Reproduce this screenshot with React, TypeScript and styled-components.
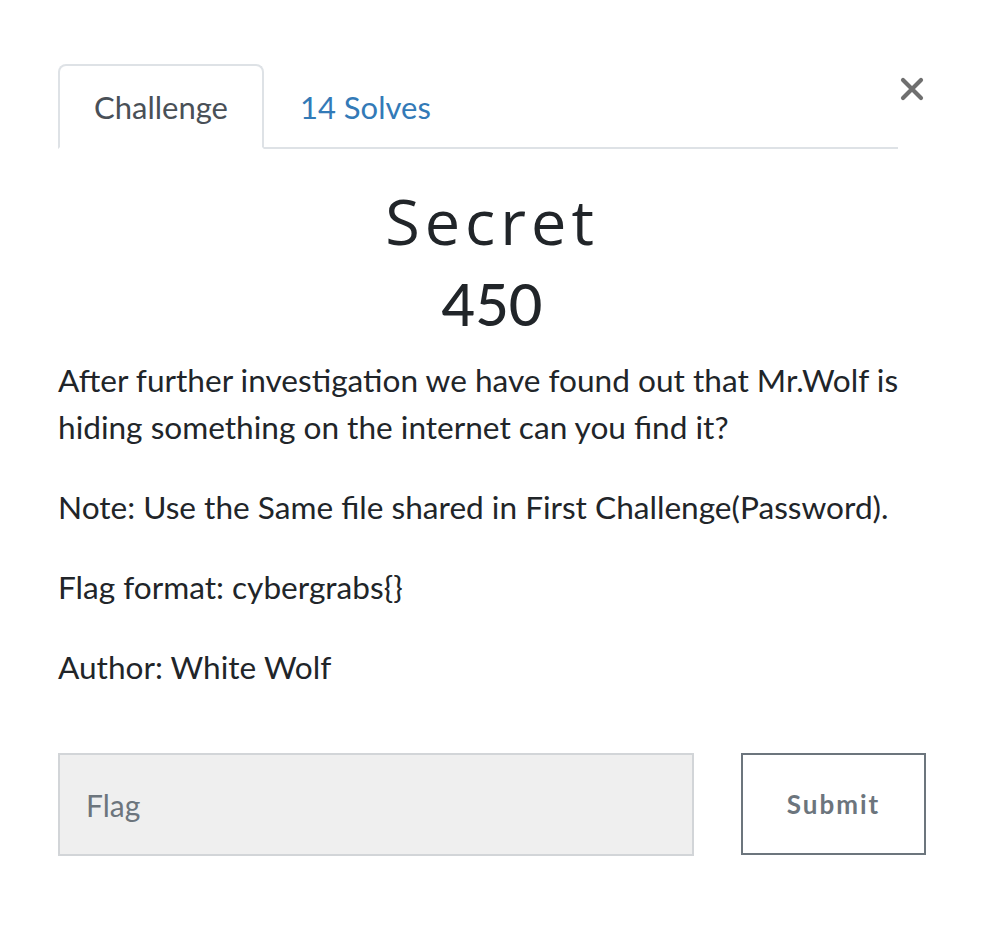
import React from "react";
import styled, { createGlobalStyle } from "styled-components";

const Global = createGlobalStyle`
  html, body {
    margin: 0;
    padding: 0;
    background: #ffffff;
  }
  body {
    font-family: Lato, "Liberation Sans", sans-serif;
    color: #212529;
  }
`;

const Modal = styled.div`
  width: 868px;
  padding: 64px 0 0 58px;
`;

const Header = styled.div`
  display: flex;
  align-items: flex-start;
`;

const Tabs = styled.ul`
  flex: 1;
  display: flex;
  margin: 0;
  padding: 0;
  list-style: none;
  border-bottom: 2px solid #dee2e6;
`;

const Tab = styled.li<{ $active?: boolean }>`
  height: 80px;
  margin-bottom: -2px;
  padding: 1px 34px 0;
  display: flex;
  align-items: center;
  font-size: 31px;
  color: ${(p) => (p.$active ? "#495057" : "#337ab7")};
  background: ${(p) => (p.$active ? "#fff" : "transparent")};
  border: 2px solid ${(p) => (p.$active ? "#dee2e6" : "transparent")};
  border-bottom-color: ${(p) => (p.$active ? "#fff" : "transparent")};
  border-radius: 8px 8px 0 0;
  box-sizing: content-box;
`;

const Close = styled.button`
  width: 28px;
  margin-top: 13px;
  padding: 0 2px 0 0;
  border: none;
  background: none;
  color: #6f6f6f;
  display: flex;
  justify-content: flex-end;
  cursor: pointer;
`;

const Title = styled.h2`
  margin: 34px 0 0;
  text-align: center;
  font-family: "Open Sans", Lato, sans-serif;
  font-weight: 400;
  font-size: 63px;
  letter-spacing: 5px;
  line-height: 1.2;
  color: #212529;
`;

const Value = styled.h3`
  margin: 10px 0 19px;
  text-align: center;
  font-weight: 500;
  font-size: 58px;
  line-height: 1.2;
  color: #212529;
`;

const Description = styled.div`
  font-size: 31.6px;
  line-height: 47px;
  p {
    margin: 0 0 33px;
  }
`;

const FormRow = styled.form`
  display: flex;
  gap: 47px;
  margin-top: 62px;
`;

const FlagInput = styled.input`
  width: 636px;
  height: 103px;
  box-sizing: border-box;
  padding: 0 26px;
  background: #efefef;
  border: 2px solid #d2d5d8;
  font-family: Lato, sans-serif;
  font-size: 30px;
  color: #495057;
  outline: none;
  &::placeholder {
    color: #6c757d;
  }
`;

const SubmitButton = styled.button`
  width: 185px;
  height: 102px;
  box-sizing: border-box;
  background: #fff;
  border: 2px solid #6c757d;
  color: #6c757d;
  font-family: Lato, sans-serif;
  font-weight: 700;
  font-size: 26px;
  letter-spacing: 2px;
  cursor: pointer;
`;

export default function App() {
  return (
    <>
      <Global />
      <Modal>
        <Header>
          <Tabs>
            <Tab $active>Challenge</Tab>
            <Tab>14 Solves</Tab>
          </Tabs>
          <Close aria-label="Close">
            <svg width="24" height="24" viewBox="0 0 24 24">
              <path
                d="M3 3 L21 21 M21 3 L3 21"
                stroke="currentColor"
                strokeWidth="4.2"
                strokeLinecap="round"
              />
            </svg>
          </Close>
        </Header>
        <Title>Secret</Title>
        <Value>450</Value>
        <Description>
          <p>
            After further investigation we have found out that Mr.Wolf is hiding
            something on the internet can you find it?
          </p>
          <p>Note: Use the Same file shared in First Challenge(Password).</p>
          <p>Flag format: cybergrabs{"{}"}</p>
          <p>Author: White Wolf</p>
        </Description>
        <FormRow onSubmit={(e) => e.preventDefault()}>
          <FlagInput placeholder="Flag" />
          <SubmitButton type="submit">Submit</SubmitButton>
        </FormRow>
      </Modal>
    </>
  );
}
